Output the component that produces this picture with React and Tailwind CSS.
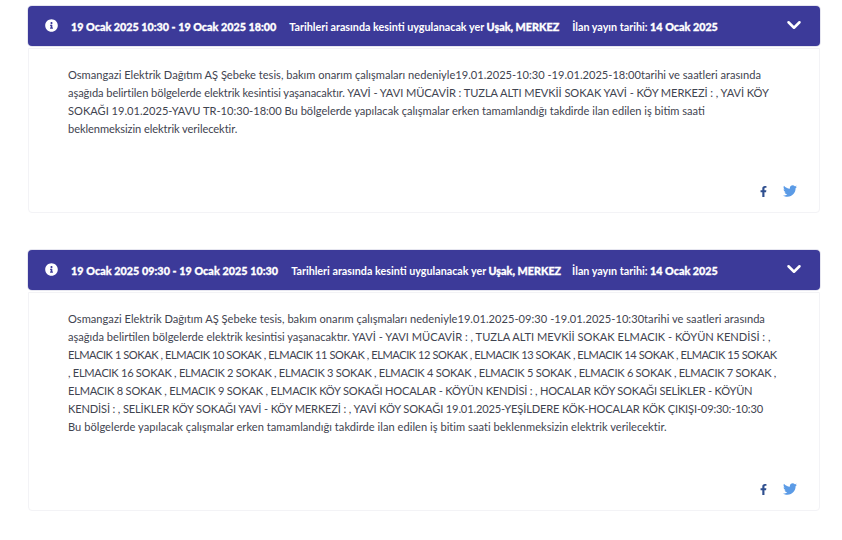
import React from "react";
import { FaFacebookF, FaTwitter, FaInfoCircle } from "react-icons/fa";
import { LuChevronDown } from "react-icons/lu";

const notices = [
  {
    range: "19 Ocak 2025 10:30 - 19 Ocak 2025 18:00",
    rangeTrack: "tracking-normal",
    dateGap: "ml-[13px]",
    bodyHeight: "h-[165px]",
    lines: [
      ["Osmangazi Elektrik Dağıtım AŞ Şebeke tesis, bakım onarım çalışmaları nedeniyle19.01.2025-10:30 -19.01.2025-18:00tarihi ve saatleri arasında", "tracking-normal"],
      ["aşağıda belirtilen bölgelerde elektrik kesintisi yaşanacaktır. YAVİ - YAVI MÜCAVİR : TUZLA ALTI MEVKİİ SOKAK YAVİ - KÖY MERKEZİ : , YAVİ KÖY", "tracking-[-0.07px]"],
      ["SOKAĞI 19.01.2025-YAVU TR-10:30-18:00 Bu bölgelerde yapılacak çalışmalar erken tamamlandığı takdirde ilan edilen iş bitim saati", "tracking-normal"],
      ["beklenmeksizin elektrik verilecektir.", "tracking-[-0.08px]"],
    ],
  },
  {
    range: "19 Ocak 2025 09:30 - 19 Ocak 2025 10:30",
    rangeTrack: "tracking-[0.05px]",
    dateGap: "ml-[11px]",
    bodyHeight: "h-[219px]",
    lines: [
      ["Osmangazi Elektrik Dağıtım AŞ Şebeke tesis, bakım onarım çalışmaları nedeniyle19.01.2025-09:30 -19.01.2025-10:30tarihi ve saatleri arasında", "tracking-[0.03px]"],
      ["aşağıda belirtilen bölgelerde elektrik kesintisi yaşanacaktır. YAVİ - YAVI MÜCAVİR : , TUZLA ALTI MEVKİİ SOKAK ELMACIK - KÖYÜN KENDİSİ : ,", "tracking-normal"],
      ["ELMACIK 1 SOKAK , ELMACIK 10 SOKAK , ELMACIK 11 SOKAK , ELMACIK 12 SOKAK , ELMACIK 13 SOKAK , ELMACIK 14 SOKAK , ELMACIK 15 SOKAK", "tracking-[-0.44px]"],
      [", ELMACIK 16 SOKAK , ELMACIK 2 SOKAK , ELMACIK 3 SOKAK , ELMACIK 4 SOKAK , ELMACIK 5 SOKAK , ELMACIK 6 SOKAK , ELMACIK 7 SOKAK ,", "tracking-[-0.28px]"],
      ["ELMACIK 8 SOKAK , ELMACIK 9 SOKAK , ELMACIK KÖY SOKAĞI HOCALAR - KÖYÜN KENDİSİ : , HOCALAR KÖY SOKAĞI SELİKLER - KÖYÜN", "tracking-[-0.21px]"],
      ["KENDİSİ : , SELİKLER KÖY SOKAĞI YAVİ - KÖY MERKEZİ : , YAVİ KÖY SOKAĞI 19.01.2025-YEŞİLDERE KÖK-HOCALAR KÖK ÇIKIŞI-09:30:-10:30", "tracking-[-0.15px]"],
      ["Bu bölgelerde yapılacak çalışmalar erken tamamlandığı takdirde ilan edilen iş bitim saati beklenmeksizin elektrik verilecektir.", "tracking-[0.03px]"],
    ],
  },
];

const NoticeCard = ({ notice }) => {
  return (
    <div className="w-[792px]">
      <div className="flex items-center h-[40px] pl-[17px] pr-[15px] bg-[#3c3a99] rounded shadow-[0_0_0_1px_#e6e6f0] text-white text-[10.75px] font-bold whitespace-nowrap">
        <FaInfoCircle className="text-[13px] mb-[2px] shrink-0" />
        <span className={`ml-[13px] mt-[2px] font-black [-webkit-text-stroke:0.3px_white] ${notice.rangeTrack}`}>
          {notice.range}
        </span>
        <span className="ml-[13px] mt-[2px]">
          Tarihleri arasında kesinti uygulanacak yer{" "}
          <span className="font-black [-webkit-text-stroke:0.3px_white]">Uşak, MERKEZ</span>
        </span>
        <span className={`${notice.dateGap} mt-[2px]`}>
          İlan yayın tarihi: <span className="font-black [-webkit-text-stroke:0.3px_white]">14 Ocak 2025</span>
        </span>
        <LuChevronDown className="ml-auto text-[22px] mb-[3px] stroke-[2.75]" />
      </div>
      <div className={`flex flex-col mt-[2px] ${notice.bodyHeight} pt-[17px] pb-[14px] pl-[39px] pr-[22px] bg-white rounded-b border border-[#f3f3f6] text-[#3f4450] text-[11.1px] leading-[18px] whitespace-nowrap`}>
        {notice.lines.map(([text, track]) => (
          <p key={text} className={track}>
            {text}
          </p>
        ))}
        <div className="flex items-center justify-end gap-[14px] mt-auto">
          <FaFacebookF className="text-[11px] text-[#2f4f8f]" />
          <FaTwitter className="text-[14px] text-[#5b9be6]" />
        </div>
      </div>
    </div>
  );
};

export default function App() {
  return (
    <div className="w-[842px] h-[540px] overflow-hidden bg-white pt-[6px] pl-[28px] flex flex-col gap-[37px] font-['Lato',sans-serif]">
      {notices.map((notice) => (
        <NoticeCard key={notice.range} notice={notice} />
      ))}
    </div>
  );
}
